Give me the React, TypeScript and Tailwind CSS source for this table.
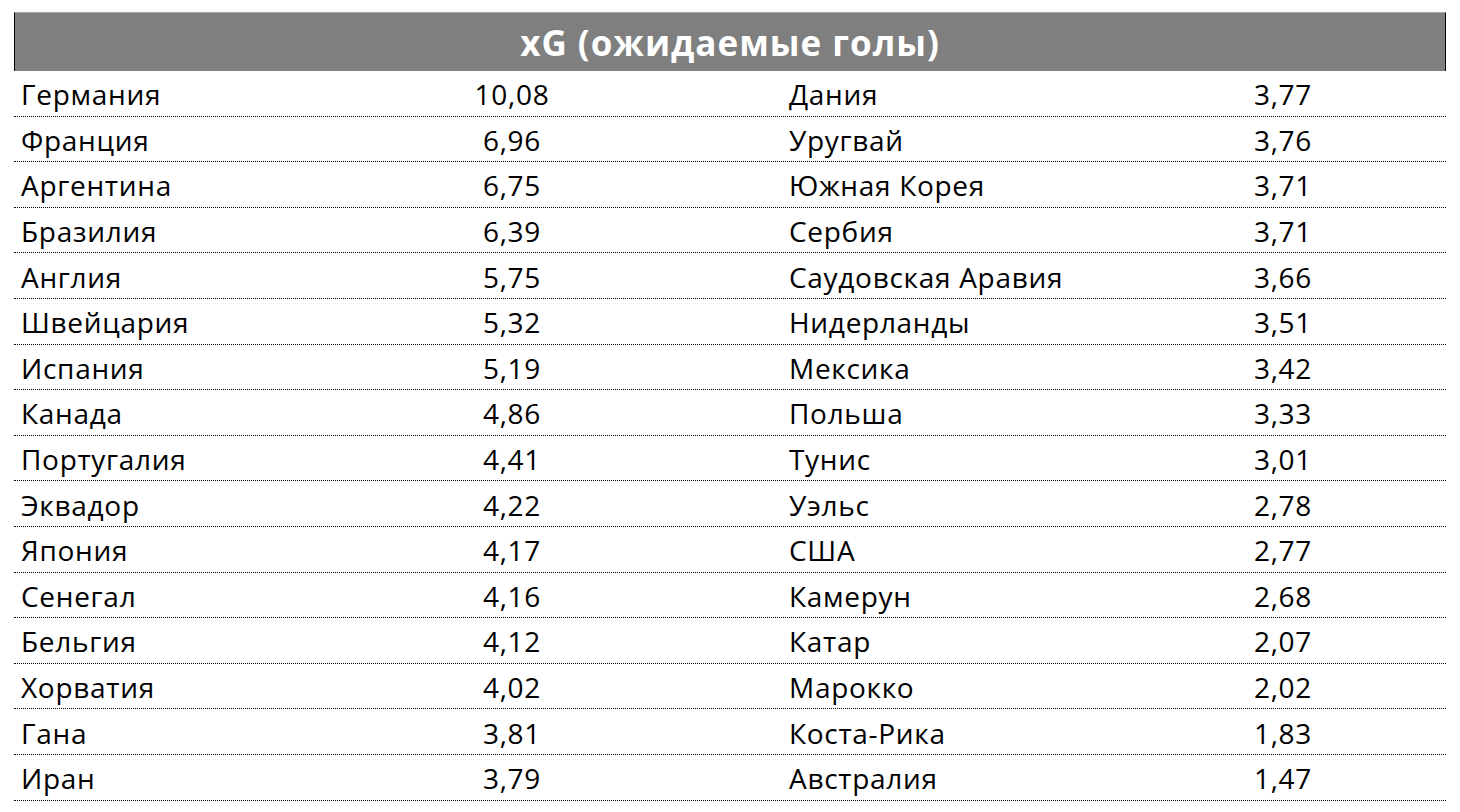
const left: [string, string][] = [
  ['Германия', '10,08'],
  ['Франция', '6,96'],
  ['Аргентина', '6,75'],
  ['Бразилия', '6,39'],
  ['Англия', '5,75'],
  ['Швейцария', '5,32'],
  ['Испания', '5,19'],
  ['Канада', '4,86'],
  ['Португалия', '4,41'],
  ['Эквадор', '4,22'],
  ['Япония', '4,17'],
  ['Сенегал', '4,16'],
  ['Бельгия', '4,12'],
  ['Хорватия', '4,02'],
  ['Гана', '3,81'],
  ['Иран', '3,79'],
]

const right: [string, string][] = [
  ['Дания', '3,77'],
  ['Уругвай', '3,76'],
  ['Южная Корея', '3,71'],
  ['Сербия', '3,71'],
  ['Саудовская Аравия', '3,66'],
  ['Нидерланды', '3,51'],
  ['Мексика', '3,42'],
  ['Польша', '3,33'],
  ['Тунис', '3,01'],
  ['Уэльс', '2,78'],
  ['США', '2,77'],
  ['Камерун', '2,68'],
  ['Катар', '2,07'],
  ['Марокко', '2,02'],
  ['Коста-Рика', '1,83'],
  ['Австралия', '1,47'],
]

export default function App() {
  return (
    <div className="w-[1460px] h-[812px] bg-white pt-[12px] pl-[14px] font-['Open_Sans',sans-serif] text-black">
      <div className="w-[1432px]">
        <div className="h-[59px] bg-[#7f7f7f] border-t border-t-[#a6a6a6] border-x border-x-black flex items-center justify-center">
          <h1 className="text-white font-bold text-[35px] tracking-[1px] leading-none">xG (ожидаемые голы)</h1>
        </div>
        {left.map(([name, val], i) => (
          <div
            key={name}
            className="grid grid-cols-[360px_276px_470px_1fr] h-[45.6px] items-center pt-[2px] border-b border-dotted border-black text-[28px] tracking-[0.7px] leading-none"
          >
            <span className="pl-[7px]">{name}</span>
            <span className="text-center">{val}</span>
            <span className="pl-[139px]">{right[i][0]}</span>
            <span className="text-center">{right[i][1]}</span>
          </div>
        ))}
      </div>
    </div>
  )
}
